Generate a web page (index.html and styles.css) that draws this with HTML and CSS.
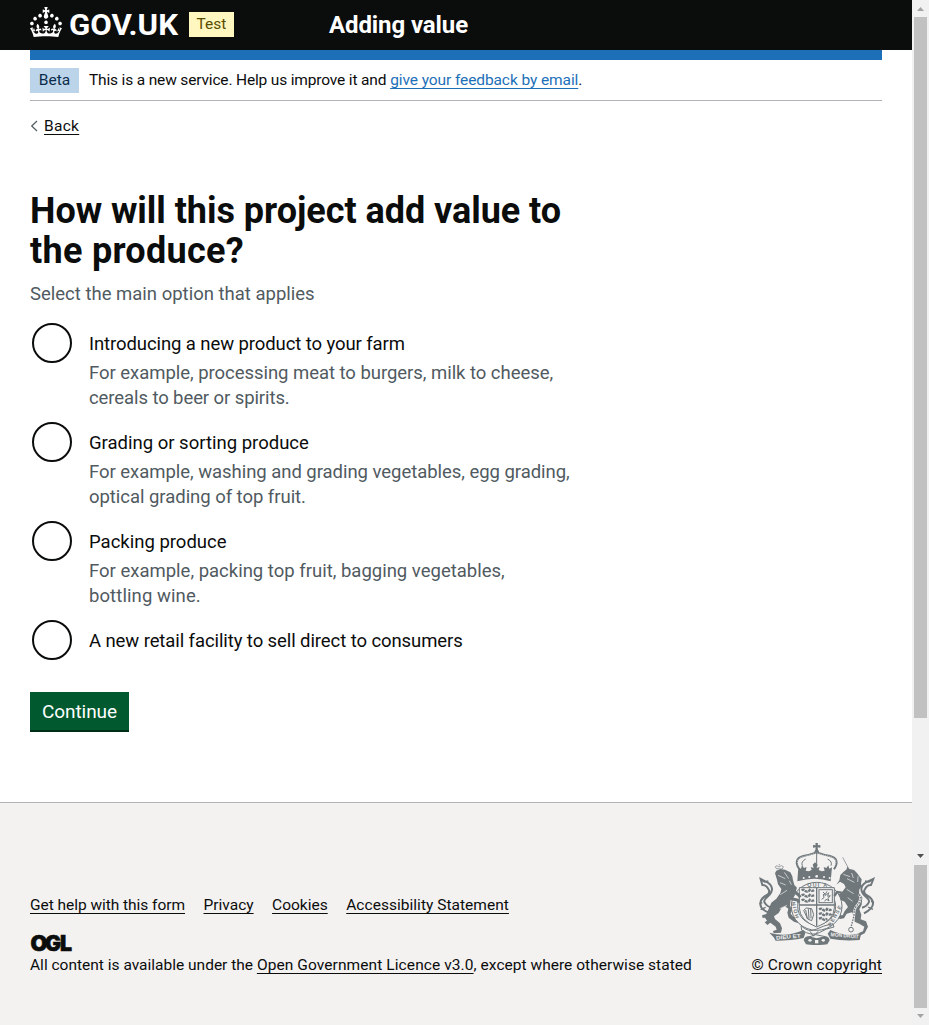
FILE: index.html
```html
<!DOCTYPE html>
<html lang="en">
<head>
<meta charset="utf-8">
<title>Adding value</title>
<link rel="stylesheet" href="styles.css">
</head>
<body>
<div class="page">
  <header class="header">
    <svg class="logo" width="148" height="30" viewBox="0 0 148 30" fill="#fff"><path d="M22.6 10.4c-1 .4-2-.1-2.4-1-.4-.9.1-2 1-2.4.9-.4 2 .1 2.4 1s-.1 2-1 2.4m-5.9 6.7c-.9.4-2-.1-2.4-1-.4-.9.1-2 1-2.4.9-.4 2 .1 2.4 1s-.1 2-1 2.4m10.8-3.7c-1 .4-2-.1-2.4-1-.4-.9.1-2 1-2.4.9-.4 2 .1 2.4 1s0 2-1 2.4m3.3 4.8c-1 .4-2-.1-2.4-1-.4-.9.1-2 1-2.4.9-.4 2 .1 2.4 1s-.1 2-1 2.4M17 4.7l2.300 1.200V2.500l-2.300.7-.2-.2.9-3h-3.400l.9 3-.2.2c-.1.1-2.300-.7-2.300-.7v3.400L15 4.700c.1.1.1.2.2.2l-1.300 4c-.1.2-.1.4-.1.6 0 1.100.8 2 1.900 2.200h.7c1-.2 1.900-1.100 1.900-2.100 0-.2 0-.4-.1-.6l-1.300-4c-.1-.2 0-.2.1-.3m-7.600 5.700c.9.4 2-.1 2.400-1 .4-.9-.1-2-1-2.400-.9-.4-2 .1-2.400 1s0 2 1 2.400m-5 3c.9.4 2-.1 2.400-1 .4-.9-.1-2-1-2.400-.9-.4-2 .1-2.400 1s.1 2 1 2.400m-3.200 4.800c.9.4 2-.1 2.400-1 .4-.9-.1-2-1-2.400-.9-.4-2 .1-2.400 1s0 2 1 2.400m14.800 11c4.400 0 8.600.3 12.300.8 1.100-4.500 2.400-7 3.700-8.800l-2.500-.9c.2 1.300.3 1.900 0 2.700-.4-.4-.8-1.100-1.100-2.300l-1.200 4c.7-.5 1.300-.8 2-.9-1.100 2.500-2.600 3.100-3.500 3-1.100-.2-1.700-1.200-1.500-2.100.3-1.200 1.500-1.500 2.100-.1 1.100-2.300-.8-3-2-2.300 1.900-1.900 2.100-3.500.6-5.600-2.100 1.600-2.100 3.200-1.200 5.500-1.200-1.400-3.200-.6-2.500 1.600.9-1.400 2.100-.5 1.900.8-.2 1.100-1.700 2.100-3.500 1.900-2.700-.2-2.900-2.100-2.900-3.600.7-.1 1.900.5 2.900 1.900l.4-4.300c-1.100 1.100-2.100 1.400-3.200 1.400.4-1.200 2.100-3 2.100-3h-5.400s1.700 1.900 2.100 3c-1.100 0-2.100-.2-3.200-1.400l.4 4.300c1-1.400 2.200-2 2.900-1.900-.1 1.500-.2 3.400-2.900 3.600-1.900.2-3.400-.8-3.500-1.900-.2-1.300 1-2.200 1.900-.8.7-2.300-1.200-3-2.500-1.600.9-2.200.9-3.900-1.200-5.500-1.500 2-1.300 3.700.6 5.600-1.200-.7-3.100 0-2 2.300.6-1.400 1.800-1.100 2.100.1.2.9-.3 1.900-1.500 2.100-.9.2-2.400-.5-3.500-3 .6 0 1.200.3 2 .9l-1.200-4c-.3 1.100-.7 1.900-1.100 2.300-.3-.8-.2-1.400 0-2.700l-2.900.9C1.300 23 2.600 25.500 3.700 30c3.700-.5 7.900-.8 12.300-.8"/><text class="logo-text" x="39" y="28" textLength="109" lengthAdjust="spacingAndGlyphs">GOV.UK</text></svg>
    <span class="tag tag-test">Test</span>
    <span class="service">Adding value</span>
  </header>
  <div class="container">
    <div class="bar"></div>
    <div class="phase"><span class="tag tag-beta">Beta</span><span class="phase-text"><span class="tight-2">This is a new service. Help us improve it and</span> <a class="blue tight-1" href="#">give your feedback by email</a>.</span></div>
    <div class="back"><svg width="8" height="12" viewBox="0 0 8 12" fill="none" stroke="#505a5f" stroke-width="1.2"><path d="M7 1L1.700 6L7 11"/></svg><a class="wide-3" href="#">Back</a></div>
    <h1><span class="snug">How will this project add value to</span><br><span class="wide-3">the produce?</span></h1>
    <p class="hint">Select the main option that applies</p>
    <div class="radios">
      <div class="item"><i class="radio"></i><div><div class="label tight-1">Introducing a new product to your farm</div><div class="desc"><span class="snug">For example, processing meat to burgers, milk to cheese,</span><br><span class="tight-1">cereals to beer or spirits.</span></div></div></div>
      <div class="item"><i class="radio"></i><div><div class="label">Grading or sorting produce</div><div class="desc"><span class="snug">For example, washing and grading vegetables, egg grading,</span><br><span class="snug">optical grading of top fruit.</span></div></div></div>
      <div class="item"><i class="radio"></i><div><div class="label">Packing produce</div><div class="desc"><span>For example, packing top fruit, bagging vegetables,</span><br><span class="wide-1">bottling wine.</span></div></div></div>
      <div class="item"><i class="radio"></i><div><div class="label tight-1">A new retail facility to sell direct to consumers</div></div></div>
    </div>
    <button class="button">Continue</button>
  </div>
  <footer class="footer">
    <div class="foot-left">
      <nav class="links"><a class="snug" href="#">Get help with this form</a><a href="#">Privacy</a><a href="#">Cookies</a><a class="loose" href="#">Accessibility Statement</a></nav>
      <svg class="ogl" width="41" height="17" viewBox="0 0 41 17"><g class="ogl-text"><text x="0.4" y="16" textLength="17" lengthAdjust="spacingAndGlyphs">O</text><text x="15" y="16" textLength="16" lengthAdjust="spacingAndGlyphs">G</text><text x="30" y="16" textLength="12" lengthAdjust="spacingAndGlyphs">L</text></g></svg>
      <div class="licence">All content is available under the <a class="wide-1" href="#">Open Government Licence v3.0</a><span class="loose">, except where otherwise stated</span></div>
    </div>
    <div class="foot-right">
      <svg class="crest" width="120" height="104" viewBox="51 36 360 312" fill="none" stroke="#6f777b" stroke-width="3">
        <g fill="#6f777b" stroke="none">
          <path d="M229 39h8l-1 7 8-1v8l-8-1 1 8h-8l1-8-8 1v-8l8 1z"/><circle cx="233" cy="66" r="7"/>
          <path d="M178 112l8 4 3-10 6 8 8-3-3 11 9 2 9-4-3-9 9 3-3-10 7-7 8 7-3 10 9-3-3 9 9 4 9-2-3-11 8 3 6-8 3 10 8-4-4 42q-47-16-100 0z"/>
          <path d="M108 130l4-8 12-5 14 2 16 8 6 12 2 12 4 14 8 8-4 12 12 11 14 5-2 12-14-2-17-8-8 6-2 18 6 12-4 12 9 10 15 6v13l-14-5-16-12-4-15 3-12-10-7-11 6-8 14-14 10 3 8 15 13 6 15-3 13-22 2-2-7 11-4-3-9-16-12-9 7-8-8 7-5-6-9-7 1-2-8 13-4 7-15 8-19 15-12 12-17 3-12-10-14-3-14z"/>
          <path d="M301 151l3-16 10-10 9-7 1-8 8 7 13 3 9 9 8 11 6 8-2 14 3 6-8 10-1 12 10 12-2 22-7 14 6 16-2 14 16 6 6 16-10 20-15 7-1-9 11-4 4-14-14-8-15-7-2-16-6-12-16 4-8 14-12 2-9-5 5-7 12 1 6-13 10-12-10-16-20-9-16-2-4 8-9-2 2-13 7-6 22 3 12-10 9-12-5-10-12-7-11 9z"/>
          <path d="M91 308q50 16 102-8l6 9-5 15q-38 8-84 8l-6-10zM274 300q50 24 93 8l-5 22q-48 4-88-4l-8-15z"/>
          <path d="M194 331q4-16 22-11l17 5 17-5q19-5 22 11l-7 12q-15 3-32 2-17 1-32-2z"/>
        </g>
        <path d="M181 118q-20-32 12-40 20-4 40-11 20 7 40 11 32 8 12 40" stroke-width="6"/>
        <path d="M181 110q-16-24 14-31 18-4 38-10 20 6 38 10 30 7 14 31" stroke="#f3f2f1" stroke-width="2" stroke-dasharray="3 3"/>
        <path d="M233 72v32M190 107q-5-12 10-20M276 107q5-12-10-20" stroke-width="3"/>
        <g fill="#f3f2f1" stroke="none"><circle cx="233" cy="139" r="4"/><circle cx="211" cy="141" r="3"/><circle cx="255" cy="141" r="3"/><circle cx="194" cy="144" r="3"/><circle cx="272" cy="144" r="3"/></g>
        <path d="M117 136l22 10m-16 12l17 7m-4-38l13 19m2 6l6 12M313 133l20 7m-9 6l22 11m-8-28l5 15m14-5l-1 17M344 191l-21-13m18 36l-15-11M124 194l20-13m0 45l-22 10" stroke="#f3f2f1" stroke-width="2"/>
        <path d="M112 116l-3-6 5-3 6 4 7-4 6 3-3 7zM121 106v-4M311 82l17 32" stroke-width="2"/>
        <path d="M97 250q-33-9-33-29 0-16 20-26 11-8 4-18-7-13-18-12l-5-18 14 7q18 7 20 22 0 12-12 23-15 13-10 19 6 12 22 15" stroke-width="6"/><path d="M63 148l13 8 12-3M61 222l9-4M65 239l15-7" stroke-width="4"/>
        <path d="M375 250q27-15 27-29 0-16-20-26-11-8-4-18 7-13 18-12l7-18-16 7q-18 7-20 22 0 12 12 23 15 13 10 19-6 12-20 15" stroke-width="6"/><path d="M403 148l-13 8-12-3M405 218l-9-4M402 238l-15-7" stroke-width="4"/>
        <ellipse cx="233" cy="229" rx="76" ry="72" fill="#f3f2f1"/><ellipse cx="233" cy="229" rx="57" ry="55"/>
        <g class="garter"><text x="205" y="171" textLength="59" lengthAdjust="spacing">QUI A</text><text x="-25" y="5" textLength="50" transform="translate(168 240) rotate(75)">NIOH</text><text x="-34" y="5" textLength="68" transform="translate(288 258) rotate(-60)">PENSE</text></g>
        <path d="M181 173h105v61q-1 37-53 57-51-20-52-57z" fill="#f3f2f1"/>
        <path d="M233 173v116M181 225h105" stroke-width="4"/>
        <g stroke-width="7"><path d="M188 181q7-5 11 2 8 5 13-3 6 5 15 0M188 196q7-5 11 2 8 5 13-3 6 5 15 0M188 211q7-5 11 2 8 5 13-3 6 5 15 0" stroke-dasharray="9 2"/><path d="M240 238q9-5 12 2 7 4 12-3 8 6 15 0M240 252q9-5 12 2 7 4 12-3 8 6 14 0M240 266q9-5 12 2 7 4 12-3" stroke-dasharray="9 2"/></g>
        <path d="M164 184l14 10 6 8M156 206l20 4 4 8" stroke-width="9"/><path d="M286 198l8-12 14 2" stroke-width="7"/>
        <rect x="240" y="179" width="40" height="39"/><path d="M248 208l7-5-2-10 8 3 8-8-3 11 8-2-7 8 3 7-9-4-4 6M252 186l7 7 5-9" stroke-width="3"/>
        <path d="M194 241l8-7 16 2 6 18-6 18-12-5zM200 240l5 26m3-29l2 30m5-30l1 28"/>
        <path d="M186 287q22 22 45 11 21-11 50-17l4 10q-24 4-44 17-24 12-53-8zM213 304l10 14 15-14M207 322l23-8 29 6" stroke-width="3"/>
        <path d="M361 193q7 14-3 29-14 12-13 35l-8 39" stroke="#f3f2f1" stroke-width="7"/><path d="M361 193q7 14-3 29-14 12-13 35l-8 31" stroke-dasharray="5 3" stroke-width="4"/><circle cx="336" cy="299" r="7"/>
        <g class="motto"><text x="111" y="326" textLength="74" lengthAdjust="spacingAndGlyphs" transform="rotate(-5 147 320)">DIEU ET</text><text x="275" y="322" textLength="84" lengthAdjust="spacingAndGlyphs" transform="rotate(5 315 319)">MON DROIT</text></g>
        <g fill="#f3f2f1" stroke="none"><ellipse cx="213" cy="331" rx="5" ry="4"/><ellipse cx="253" cy="331" rx="5" ry="4"/><path d="M228 330h10v10h-10z"/></g>
      </svg>
      <a class="wide-2" href="#">© Crown copyright</a>
    </div>
  </footer>
</div>
<div class="scroll">
  <i class="arrow up"></i><i class="thumb main"></i><i class="arrow down dark"></i><i class="thumb small"></i><i class="arrow down"></i>
</div>
</body>
</html>
```
FILE: styles.css
```css
* { box-sizing: border-box; }
body { margin: 0; display: flex; height: 1025px; overflow: hidden; font: 15.5px/20px Roboto, "Liberation Sans", sans-serif; color: #0b0c0c; background: #fff; }
.page { width: 912px; display: flex; flex-direction: column; }
span, a { white-space: nowrap; }
a { color: inherit; text-decoration: underline; text-decoration-thickness: 1px; text-underline-offset: 3px; text-decoration-skip-ink: none; }
.tight-2 { letter-spacing: -0.16px; }
.tight-1 { letter-spacing: -0.09px; }
.snug { letter-spacing: -0.04px; }
.loose { letter-spacing: 0.03px; }
.wide-1 { letter-spacing: 0.09px; }
.wide-2 { letter-spacing: 0.125px; }
.wide-3 { letter-spacing: 0.29px; }
.blue { color: #1d70b8; }
.header { height: 50px; padding-left: 30px; background: #0b0c0c; display: flex; align-items: flex-start; }
.logo { margin-top: 7px; overflow: visible; }
.logo-text { font: 700 29px Roboto, sans-serif; }
.tag { display: flex; justify-content: center; height: 25px; line-height: 25px; flex: none; }
.tag-test { margin: 12px 0 0 11px; width: 45px; background: #fff7bf; color: #594d00; }
.tag-beta { width: 49px; background: #bbd4ea; color: #0c2d4a; margin-right: 10px; }
.service { margin: 10px 0 0 95px; font-size: 24px; line-height: 30px; font-weight: 700; color: #fff; letter-spacing: -0.1px; }
.container { padding: 0 30px; height: 752px; }
.bar { height: 10px; background: #1d70b8; }
.phase { height: 41px; padding-top: 8px; display: flex; border-bottom: 1px solid #b1b4b6; line-height: 25px; }
.back { height: 20px; margin-top: 15px; display: flex; align-items: center; gap: 6px; }
h1 { margin: 55px 0 11px; font-size: 36px; line-height: 40px; font-weight: 700; }
.hint { margin: 0 0 16px; font-size: 18.5px; line-height: 25px; color: #505a5f; }
.radios { display: flex; flex-direction: column; gap: 11px; font-size: 18.5px; line-height: 25px; }
.item { display: flex; gap: 17px; padding-left: 2px; }
.radio { width: 40px; height: 40px; border: 2px solid #0b0c0c; border-radius: 50%; flex: none; }
.label { padding: 9px 0 4px; }
.item:last-child .label { padding-bottom: 6px; }
.desc { color: #505a5f; }
.button { display: block; margin-top: 32px; width: 99px; height: 40px; padding: 0; border: 0; background: #00592f; box-shadow: inset 0 -2px #002d18; color: #fff; font: 19px/38px Roboto, sans-serif; letter-spacing: -0.07px; }
.footer { flex: 1; border-top: 1px solid #b1b4b6; background: #f3f2f1; padding: 0 30px; display: flex; justify-content: space-between; }
.foot-left { padding-top: 92px; }
.links { display: flex; gap: 18.5px; }
.ogl { display: block; margin: 20px 0 3px; overflow: visible; }
.ogl-text { font: 900 21px Inter, sans-serif; fill: #0b0c0c; stroke: #0b0c0c; stroke-width: 0.6px; }
.foot-right { padding-top: 39px; display: flex; flex-direction: column; align-items: flex-end; }
.crest { margin: 0 6px 9px 0; }
.motto text { font: 700 16px "Liberation Sans", sans-serif; fill: #f3f2f1; stroke: none; }
.garter text { font: 700 16px "Liberation Sans", sans-serif; fill: #6f777b; stroke: none; }
.scroll { width: 17px; background: #f1f1f1; display: flex; flex-direction: column; align-items: center; }
.thumb { width: 13px; background: #c1c1c1; }
.main { height: 701px; margin-bottom: 136px; }
.small { height: 143px; margin-top: 7px; margin-bottom: 6px; }
.arrow { width: 7px; height: 4px; background: #a3a3a3; flex: none; }
.up { margin: 7px 0 6px; clip-path: polygon(50% 0, 100% 100%, 0 100%); }
.down { clip-path: polygon(0 0, 100% 0, 50% 100%); }
.dark { background: #505050; }
```
